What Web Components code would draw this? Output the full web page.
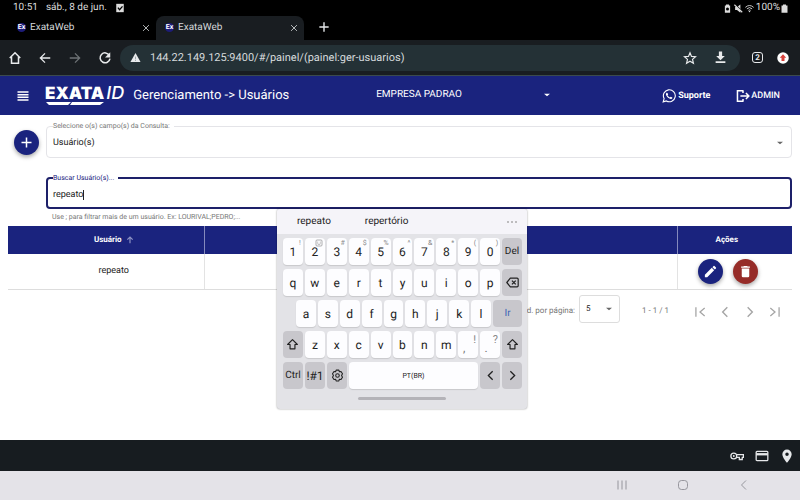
<!DOCTYPE html>
<html lang="pt-BR">
<head>
<meta charset="utf-8">
<title>ExataWeb</title>
<style>
  html, body { margin: 0; }
  body { min-height: 100vh; display: flex; flex-direction: column; background: #fff; font-family: Roboto, "Liberation Sans", sans-serif; text-rendering: geometricPrecision; color: #222; position: relative; }
  user-admin { flex: 1; }
  soft-keyboard { position: absolute; left: 277px; top: 209px; }
</style>
</head>
<body>
<status-bar></status-bar>
<tab-strip>
  <browser-tab>ExataWeb</browser-tab>
  <browser-tab active>ExataWeb</browser-tab>
</tab-strip>
<address-bar>144.22.149.125:9400/#/painel/(painel:ger-usuarios)</address-bar>
<app-bar>Gerenciamento -&gt; Usuários</app-bar>
<user-admin></user-admin>
<autofill-bar></autofill-bar>
<system-nav></system-nav>
<soft-keyboard></soft-keyboard>

<script>
const ICONS = {
  check: '<path d="M3 2h18v20H3z" fill="currentColor"/><path d="M7 11l4 5 7-8" fill="none" stroke="#000" stroke-width="3"/>',
  battsave: '<path d="M5 4h3V1h8v3h3v19H5z" fill="currentColor"/><circle cx="12" cy="13" r="4" fill="#000"/>',
  mute: '<path d="M3 8h5l9-7v22l-9-7H3z" fill="currentColor"/><path d="M3 1l20 20" stroke="#000" stroke-width="3"/><path d="M1 2l21 20" stroke="currentColor" stroke-width="3"/>',
  wifi: '<path d="M1 9q11-10 22 0M5 13q7-7 14 0M9 17q3-3 6 0" fill="none" stroke="currentColor" stroke-width="2.4"/><circle cx="12" cy="20" r="2" fill="currentColor"/>',
  battery: '<path d="M4 4h4V1h8v3h4v19H4z" fill="currentColor"/>',
  close: '<path d="M5 5l14 14M19 5L5 19" fill="none" stroke="currentColor" stroke-width="2"/>',
  plus: '<path d="M12 4v16M4 12h16" fill="none" stroke="currentColor" stroke-width="2.400"/>',
  home: '<path d="M3 12l9-9 9 9M6 10v11h12V10" fill="none" stroke="currentColor" stroke-width="2.6"/>',
  back: '<path d="M21 12H4M12 4l-8 8 8 8" fill="none" stroke="currentColor" stroke-width="2.2"/>',
  forward: '<path d="M3 12h17M12 4l8 8-8 8" fill="none" stroke="currentColor" stroke-width="2.2"/>',
  reload: '<path d="M19.5 7.5A8.500 8.500 0 1 0 20.500 13" fill="none" stroke="currentColor" stroke-width="2.6"/><path d="M21 2v9h-9z" fill="currentColor"/>',
  warning: '<path d="M12 2L23 22H1z" fill="currentColor"/><path d="M12 10v6M12 17.500v2" stroke="#7e8b90" stroke-width="1.500"/>',
  star: '<path d="M12 3l2.600 6.300 6.900.6-5.200 4.500 1.600 6.700L12 17.500l-5.900 3.600 1.600-6.700-5.200-4.500 6.900-.6z" fill="none" stroke="currentColor" stroke-width="2"/>',
  download: '<path d="M9 1h6v8h5l-8 8-8-8h5zM3 19h18v3H3z" fill="currentColor"/>',
  update: '<circle cx="12" cy="12" r="11.500" fill="#fff"/><path d="M12 4.500l6.500 7H15V18H9v-6.500H5.500z" fill="#d8423c"/>',
  menu: '<path d="M1 4h22M1 9.300h22M1 14.600h22M1 20h22" stroke="currentColor" stroke-width="3"/>',
  whatsapp: '<path d="M2 22l1.600-5.600A10.200 10.200 0 1 1 7.500 20.400z" fill="none" stroke="currentColor" stroke-width="1.900"/><path d="M8 6.500c-2 1.200-1.600 4 .8 6.700 2.600 3 6 4.600 7.900 3.400 1.200-.8 1.200-1.800.9-2.200l-2.700-1.300-1.400 1.600c-1.700-.6-3.300-2.200-4-3.800l1.100-1.300-1.200-2.900z" fill="currentColor"/>',
  exit: '<path d="M12 3H2.500v18H12M12 2v5M12 22v-5M7.500 12H22M17 7l5 5-5 5" fill="none" stroke="currentColor" stroke-width="2.600"/>',
  drop: '<path d="M3 8h18l-9 8z" fill="currentColor"/>',
  sortup: '<path d="M12 22V3M4 11l8-8 8 8" fill="none" stroke="currentColor" stroke-width="3.500"/>',
  pencil: '<path d="M3 17.250V21h3.750L17.810 9.940l-3.750-3.750zM20.710 7.040a1 1 0 0 0 0-1.410l-2.340-2.340a1 1 0 0 0-1.410 0l-1.830 1.830 3.750 3.750z" fill="currentColor"/>',
  trash: '<path d="M6 19a2 2 0 0 0 2 2h8a2 2 0 0 0 2-2V7H6zM19 4h-3.500l-1-1h-5l-1 1H5v2h14z" fill="currentColor"/>',
  first: '<path d="M5 4v16M20 5l-8 7 8 7" fill="none" stroke="currentColor" stroke-width="2.200"/>',
  prev: '<path d="M16 4l-8 8 8 8" fill="none" stroke="currentColor" stroke-width="2.400"/>',
  next: '<path d="M8 4l8 8-8 8" fill="none" stroke="currentColor" stroke-width="2.400"/>',
  last: '<path d="M19 4v16M4 5l8 7-8 7" fill="none" stroke="currentColor" stroke-width="2.200"/>',
  key: '<circle cx="6.500" cy="12" r="5" fill="none" stroke="currentColor" stroke-width="2.200"/><circle cx="6.500" cy="12" r="1.600" fill="currentColor"/><path d="M11 9.500h12v5h-2V18h-5v-3.500h-5" fill="none" stroke="currentColor" stroke-width="2.200"/>',
  card: '<rect x="2" y="4" width="20" height="16" rx="1.500" fill="none" stroke="currentColor" stroke-width="2.200"/><path d="M2 9h20" stroke="currentColor" stroke-width="4"/>',
  pin: '<path fill-rule="evenodd" d="M12 1a8 8 0 0 0-8 8c0 6 8 14.500 8 14.500S20 15 20 9a8 8 0 0 0-8-8zm0 5a3 3 0 1 1 0 6 3 3 0 0 1 0-6z" fill="currentColor"/>',
  recents: '<path d="M4 3v18M12 3v18M20 3v18" stroke="currentColor" stroke-width="1.800"/>',
  homekey: '<rect x="3" y="3" width="18" height="18" rx="6" fill="none" stroke="currentColor" stroke-width="1.800"/>',
  backkey: '<path d="M16 3l-9 9 9 9" fill="none" stroke="currentColor" stroke-width="1.800"/>',
  shift: '<path d="M12 3l9 9h-4.500v8h-9v-8H3z" fill="none" stroke="currentColor" stroke-width="2.200" stroke-linejoin="round"/>',
  erase: '<path d="M8 4h12.500a2 2 0 0 1 2 2v12a2 2 0 0 1-2 2H8l-6.500-8z" fill="none" stroke="currentColor" stroke-width="2.200" stroke-linejoin="round"/><path d="M11 8.500l7 7M18 8.500l-7 7" stroke="currentColor" stroke-width="2.400"/>',
  gear: '<path d="M9.500 2h5l1 3 3-.5 2.700 4.300L19.500 12l1.700 3.200-2.700 4.300-3-.5-1 3h-5l-1-3-3 .5-2.700-4.300L4.500 12 2.800 8.800l2.700-4.300 3 .5z" fill="none" stroke="currentColor" stroke-width="2" stroke-linejoin="round"/><circle cx="12" cy="12" r="3.300" fill="none" stroke="currentColor" stroke-width="2"/>',
  emoji: '<rect x="3" y="3" width="18" height="18" rx="3" fill="none" stroke="currentColor" stroke-width="2"/><path d="M8 8v3M16 8v3M7 14q5 5 10 0" fill="none" stroke="currentColor" stroke-width="2"/>',
  dots: '<circle cx="4" cy="12" r="2" fill="currentColor"/><circle cx="12" cy="12" r="2" fill="currentColor"/><circle cx="20" cy="12" r="2" fill="currentColor"/>'
};

const BASE = `<style>
  :host { display: block; box-sizing: border-box; }
  *, *::before, *::after { box-sizing: border-box; }
  button, input, select { font: inherit; color: inherit; text-rendering: inherit; background: none; border: 0; padding: 0; margin: 0; outline: 0; }
  button { display: inline-flex; align-items: center; justify-content: center; }
  .grow { flex: 1; }
</style>`;

function define(name, html) {
  customElements.define(name, class extends HTMLElement {
    constructor() {
      super();
      this.attachShadow({ mode: 'open' });
    }
    connectedCallback() {
      this.shadowRoot.innerHTML = BASE + (typeof html === 'function' ? html(this) : html);
    }
  });
}

define('ui-icon', el => `<style>
  :host { display: inline-flex; width: var(--size, 14px); height: var(--size, 14px); flex: none; }
  svg { width: 100%; height: 100%; display: block; }
</style><svg viewBox="0 0 24 24" aria-hidden="true">${ICONS[el.getAttribute('name')]}</svg>`);

define('status-bar', `<style>
  :host { display: flex; align-items: center; gap: 8px; height: 16px; padding: 0 11px 0 13px; background: #000; color: #dcdcdc; font-size: 10px; line-height: 16px; --size: 10px; }
  .right { display: flex; align-items: center; gap: 2px; }
  .right ui-icon:last-child { margin-left: -2px; }
</style>
<span>10:51</span><span>sáb., 8 de jun.</span><ui-icon name="check"></ui-icon>
<span class="grow"></span>
<span class="right" style="--size:9px"><ui-icon name="battsave"></ui-icon><ui-icon name="mute"></ui-icon><ui-icon name="wifi"></ui-icon><span>100%</span><ui-icon name="battery"></ui-icon></span>`);

define('tab-strip', `<style>
  :host { display: flex; align-items: stretch; height: 24px; padding-left: 8px; background: #000; color: #e3e6e8; --size: 14px; }
  button { width: 40px; padding-bottom: 2px; }
</style><slot></slot><button aria-label="Nova guia"><ui-icon name="plus"></ui-icon></button>`);

define('browser-tab', `<style>
  :host { display: flex; align-items: center; gap: 4px; width: 148px; padding: 0 4px 1px 9px; font-size: 10px; line-height: 14px; color: #d5d8da; --size: 10px; }
  :host([active]) { background: #191d21; border-radius: 8px 8px 0 0; }
  .mark { width: 9px; height: 9px; border-radius: 5px; background: #1d1c78; color: #fff; font-size: 7px; line-height: 9px; font-weight: 700; display: flex; justify-content: center; }
  button { width: 12px; height: 14px; }
</style><span class="mark">Ex</span><span><slot></slot></span><span class="grow"></span><button aria-label="Fechar guia"><ui-icon name="close"></ui-icon></button>`);

define('address-bar', `<style>
  :host { display: flex; align-items: center; height: 36px; padding: 0 11px 0 8px; background: #191d21; border-bottom: 1px solid #3b4a4d; color: #e8eaec; --size: 14px; }
  .nav button { width: 14px; margin-right: 16px; }
  .nav { display: flex; }
  .nav button:last-child { margin-right: 8px; }
  .dim { color: #6d7275; }
  .pill { flex: 1; height: 26px; border-radius: 13px; background: #243136; display: flex; align-items: center; padding: 0 13px 0 10px; gap: 9px; font-size: 11px; line-height: 16px; }
  .url { flex: 1; color: #d5dadc; }
  .pill button + button { margin-left: 8px; }
  .count { width: 11px; height: 11px; border: 1px solid #e8eaec; border-radius: 3px; font-size: 8px; line-height: 9px; font-weight: 700; margin: 0 14px 0 12px; }
</style>
<div class="nav"><button aria-label="Início"><ui-icon name="home"></ui-icon></button><button aria-label="Voltar"><ui-icon name="back"></ui-icon></button><button class="dim" aria-label="Avançar"><ui-icon name="forward"></ui-icon></button><button aria-label="Recarregar"><ui-icon name="reload"></ui-icon></button></div>
<div class="pill"><ui-icon name="warning" style="--size:11px"></ui-icon><span class="url"><slot></slot></span><button aria-label="Favorito"><ui-icon name="star"></ui-icon></button><button aria-label="Baixar"><ui-icon name="download" style="--size:13px"></ui-icon></button></div>
<button class="count" aria-label="Guias abertas">2</button><button aria-label="Atualizar"><ui-icon name="update" style="--size:12px"></ui-icon></button>`);

define('exata-logo', `<style>
  :host { display: flex; flex-direction: column; font-family: Inter, sans-serif; color: #fff; }
  .name { display: flex; align-items: baseline; gap: 2px; font-size: 17px; line-height: 15px; font-weight: 900; }
  i { font-weight: 500; font-size: 18px; }
  svg { width: 60px; height: 3px; display: block; }
</style><span class="name">EXATA<i>ID</i></span>
<svg viewBox="0 0 60 3" aria-hidden="true"><path d="M1 0h25l-3 3H4zM27 0h32l-4 3H25z" fill="#fff"/></svg>`);

define('app-bar', `<style>
  :host { display: flex; align-items: center; height: 39px; padding: 0 20px 0 15px; background: #1a237e; color: #fff; font-size: 10px; line-height: 16px; }
  .menu { width: 15px; margin-right: 15px; --size: 12px; }
  h1 { margin: 0 0 0 9px; font-size: 13px; line-height: 16px; font-weight: 400; flex: 1; white-space: nowrap; }
  .company { display: flex; align-items: center; flex: none; width: 175px; margin-right: 111px; padding-bottom: 2px; }
  select { appearance: none; width: 100%; font-size: 10px; line-height: 16px; }
  .company ui-icon { --size: 8px; margin-left: -8px; pointer-events: none; }
  a { color: inherit; text-decoration: none; font-size: 9px; font-weight: 700; display: flex; align-items: center; gap: 2px; }
  a + a { margin-left: 26px; gap: 1px; font-weight: 500; }
</style>
<button class="menu" aria-label="Menu"><ui-icon name="menu"></ui-icon></button>
<exata-logo></exata-logo>
<h1><slot></slot></h1>
<div class="company"><select aria-label="Empresa"><option>EMPRESA PADRAO</option></select><ui-icon name="drop"></ui-icon></div>
<a href="#suporte"><ui-icon name="whatsapp"></ui-icon>Suporte</a>
<a href="#sair"><ui-icon name="exit"></ui-icon>ADMIN</a>`);

define('round-button', el => `<style>
  :host { display: inline-block; }
  button { width: 25px; height: 25px; border-radius: 50%; background: var(--fill, #1a237e); color: #fff; box-shadow: 0 2px 4px rgba(0,0,0,.35); --size: 15px; }
</style><button aria-label="${el.getAttribute('label')}"><ui-icon name="${el.getAttribute('icon')}"></ui-icon></button>`);

define('select-field', `<style>
  fieldset { margin: 0; padding: 0 7px 0 6px; border: 1px solid #e4e4e8; border-radius: 4px; min-width: 0; }
  legend { padding: 0 4px 0 0; font-size: 7px; line-height: 8px; color: #777; }
  div { display: flex; align-items: center; height: 27px; padding-bottom: 1px; }
  select { appearance: none; flex: 1; height: 24px; font-size: 9px; line-height: 12px; color: #222; }
  ui-icon { --size: 8px; margin-left: -8px; color: #666; pointer-events: none; }
</style><fieldset><legend><label for="campo">Selecione o(s) campo(s) da Consulta:</label></legend>
<div><select id="campo"><option>Usuário(s)</option></select><ui-icon name="drop"></ui-icon></div></fieldset>`);

define('search-field', `<style>
  fieldset { margin: 0; padding: 0 6px 0 5px; border: 2px solid #1d2069; border-radius: 4px; min-width: 0; }
  legend { padding: 0 4px 0 0; font-size: 7px; line-height: 8px; color: #1a237e; }
  div { display: flex; align-items: center; height: 25px; }
  input { field-sizing: content; font-size: 9px; line-height: 12px; height: 16px; color: #222; caret-color: transparent; }
  .caret { width: 1px; height: 10px; background: #222; }
  p { margin: 4px 0 0 6px; font-size: 7px; line-height: 8px; color: #777; }
</style><fieldset><legend><label for="busca">Buscar Usuário(s)...</label></legend>
<div><input id="busca" type="text" value="repeato"><span class="caret"></span></div></fieldset>
<p>Use ; para filtrar mais de um usuário. Ex: LOURIVAL;PEDRO;...</p>`);

define('user-table', `<style>
  table { width: 100%; border-collapse: collapse; table-layout: fixed; font-size: 9px; line-height: 12px; }
  th { background: #1a237e; color: #fff; height: 28px; padding: 0; font-size: 8px; font-weight: 700; }
  th + th { border-left: 1px solid #8489bd; }
  td { height: 35px; padding: 0; text-align: center; border-bottom: 1px solid #ddd; color: #222; }
  td + td { border-left: 1px solid #e3e3e3; }
  th:first-child, td:first-child { padding-left: 16px; }
  .a { width: 25%; } .c { width: 115px; }
  .sort { display: inline-flex; align-items: center; gap: 4px; color: #fff; font-weight: 700; --size: 8px; }
  .sort ui-icon { color: #8e93c4; }
  .acts { display: flex; justify-content: center; gap: 10px; padding: 0 16px 0 2px; }
  th:last-child { padding-right: 16px; }
</style><table><colgroup><col class="a"><col><col class="c"></colgroup>
<thead><tr><th scope="col"><button class="sort">Usuário<ui-icon name="sortup"></ui-icon></button></th><th scope="col"></th><th scope="col">Ações</th></tr></thead>
<tbody><tr><td>repeato</td><td></td><td><div class="acts"><round-button icon="pencil" label="Editar"></round-button><round-button icon="trash" label="Excluir" style="--fill:#962c28"></round-button></div></td></tr></tbody></table>`);

define('table-pager', `<style>
  :host { display: flex; align-items: center; justify-content: flex-end; padding: 5px 10px 0 0; font-size: 8px; line-height: 12px; color: #777; }
  .size { display: flex; align-items: center; width: 41px; height: 28px; margin: 0 22px 0 4px; padding: 0 6px; border: 1px solid #ddd; border-radius: 3px; color: #222; }
  select { appearance: none; flex: 1; min-width: 0; height: 20px; }
  .size ui-icon { --size: 8px; color: #666; margin-left: -8px; pointer-events: none; }
  nav { display: flex; gap: 11px; margin-left: 24px; padding-top: 6px; color: #a5a5a5; }
  .lab, .range { padding-top: 4px; }
</style><label class="lab" for="n">Qtd. por página:</label><span class="size"><select id="n"><option>5</option></select><ui-icon name="drop"></ui-icon></span><span class="range">1 - 1 / 1</span>
<nav><button aria-label="Primeira página"><ui-icon name="first"></ui-icon></button><button aria-label="Página anterior"><ui-icon name="prev"></ui-icon></button><button aria-label="Próxima página"><ui-icon name="next"></ui-icon></button><button aria-label="Última página"><ui-icon name="last"></ui-icon></button></nav>`);

define('user-admin', `<style>
  :host { padding: 7px 8px 0; background: #fff; }
  .fields { display: grid; grid-template-columns: 31px 1fr; column-gap: 7px; row-gap: 16px; margin-bottom: 5px; }
  .add { padding: 8px 0 0 6px; }
  search-field { grid-column: 2; }
</style><div class="fields"><div class="add"><round-button icon="plus" label="Adicionar"></round-button></div><select-field></select-field><search-field></search-field></div>
<user-table></user-table><table-pager></table-pager>`);

define('autofill-bar', `<style>
  :host { display: flex; justify-content: flex-end; align-items: center; gap: 11px; height: 31px; padding-right: 6px; background: #171c20; color: #e6e8ea; --size: 14px; }
</style><button aria-label="Senhas"><ui-icon name="key"></ui-icon></button><button aria-label="Cartões"><ui-icon name="card"></ui-icon></button><button aria-label="Endereços"><ui-icon name="pin"></ui-icon></button>`);

define('system-nav', `<style>
  :host { display: flex; justify-content: flex-end; align-items: center; gap: 49px; height: 29px; padding: 0 50px 1px 0; background: #e4e3e8; color: #8d8d94; --size: 12px; }
</style><button aria-label="Recentes"><ui-icon name="recents"></ui-icon></button><button aria-label="Início"><ui-icon name="homekey"></ui-icon></button><button aria-label="Voltar"><ui-icon name="backkey"></ui-icon></button>`);

define('key-cap', el => {
  const icon = el.getAttribute('icon'), alt = el.getAttribute('alt');
  return `<style>
  :host { display: block; flex: 1; min-width: 0; height: 27px; }
  :host([wide]) { flex: none; width: 129px; font-size: 7px; }
  :host([ir]) { flex: none; width: 29px; font-size: 10px; color: #3b62b5; }
  button { position: relative; width: 100%; height: 100%; border-radius: 4px; background: #fdfdff; box-shadow: 0 1px 1px rgba(0,0,0,.12); white-space: nowrap; --size: 13px; }
  :host([dark]) button { background: #c8c7cc; box-shadow: none; }
  :host([small]) { font-size: 10px; }
  :host([punct]) { color: #777; }
  :host([punct]) button { padding: 6px 8px 0 0; }
  .alt { position: absolute; right: 2px; top: 1px; font-size: 7px; line-height: 9px; color: #888; --size: 8px; }
  :host([punct]) .alt { font-size: 11px; top: 4px; }
</style><button aria-label="${el.getAttribute('label') || el.textContent}">${icon ? `<ui-icon name="${icon}"></ui-icon>` : '<slot></slot>'}${alt ? `<span class="alt">${alt === 'emoji' ? '<ui-icon name="emoji"></ui-icon>' : alt}</span>` : ''}</button>`;
});

const keys = s => [...s].map(c => `<key-cap>${c}</key-cap>`).join('');
const ALTS = ['!', 'emoji', '#', '$', '%', '^', '&amp;', '*', '(', ')'];
define('soft-keyboard', `<style>
  :host { width: 250px; background: #e3e3e7; border-radius: 3px; overflow: hidden; box-shadow: 0 0 2px rgba(0,0,0,.45); color: #222; font-size: 12px; line-height: 14px; }
  .suggest { display: flex; align-items: center; height: 25px; padding: 0 9px 0 20px; background: #f5f4f9; font-size: 10px; }
  .suggest button + button { margin-left: 34px; }
  .suggest button:last-child { margin-left: auto; color: #aaa; --size: 12px; }
  .rows { display: grid; gap: 4px; padding: 4px 5px 0 6px; }
  .row { display: flex; gap: 2px; }
  .home { padding-left: 13px; }
  .handle { width: 88px; height: 3px; border-radius: 2px; background: #b4b3b8; margin: 8px auto 9px; }
</style>
<div class="suggest"><button>repeato</button><button>repertório</button><button aria-label="Mais"><ui-icon name="dots"></ui-icon></button></div>
<div class="rows">
<div class="row">${[...'1234567890'].map((c, i) => `<key-cap alt="${ALTS[i]}">${c}</key-cap>`).join('')}<key-cap dark small>Del</key-cap></div>
<div class="row">${keys('qwertyuiop')}<key-cap dark icon="erase" label="Apagar"></key-cap></div>
<div class="row home">${keys('asdfghjkl')}<key-cap dark ir>Ir</key-cap></div>
<div class="row"><key-cap dark icon="shift" label="Shift"></key-cap>${keys('zxcvbnm')}<key-cap punct alt="!">,</key-cap><key-cap punct alt="?">.</key-cap><key-cap dark icon="shift" label="Shift"></key-cap></div>
<div class="row"><key-cap dark small>Ctrl</key-cap><key-cap dark>!#1</key-cap><key-cap dark icon="gear" label="Configurações"></key-cap><key-cap wide>PT(BR)</key-cap><key-cap dark icon="prev" label="Esquerda"></key-cap><key-cap dark icon="next" label="Direita"></key-cap></div>
</div><div class="handle"></div>`);
</script>
</body>
</html>
